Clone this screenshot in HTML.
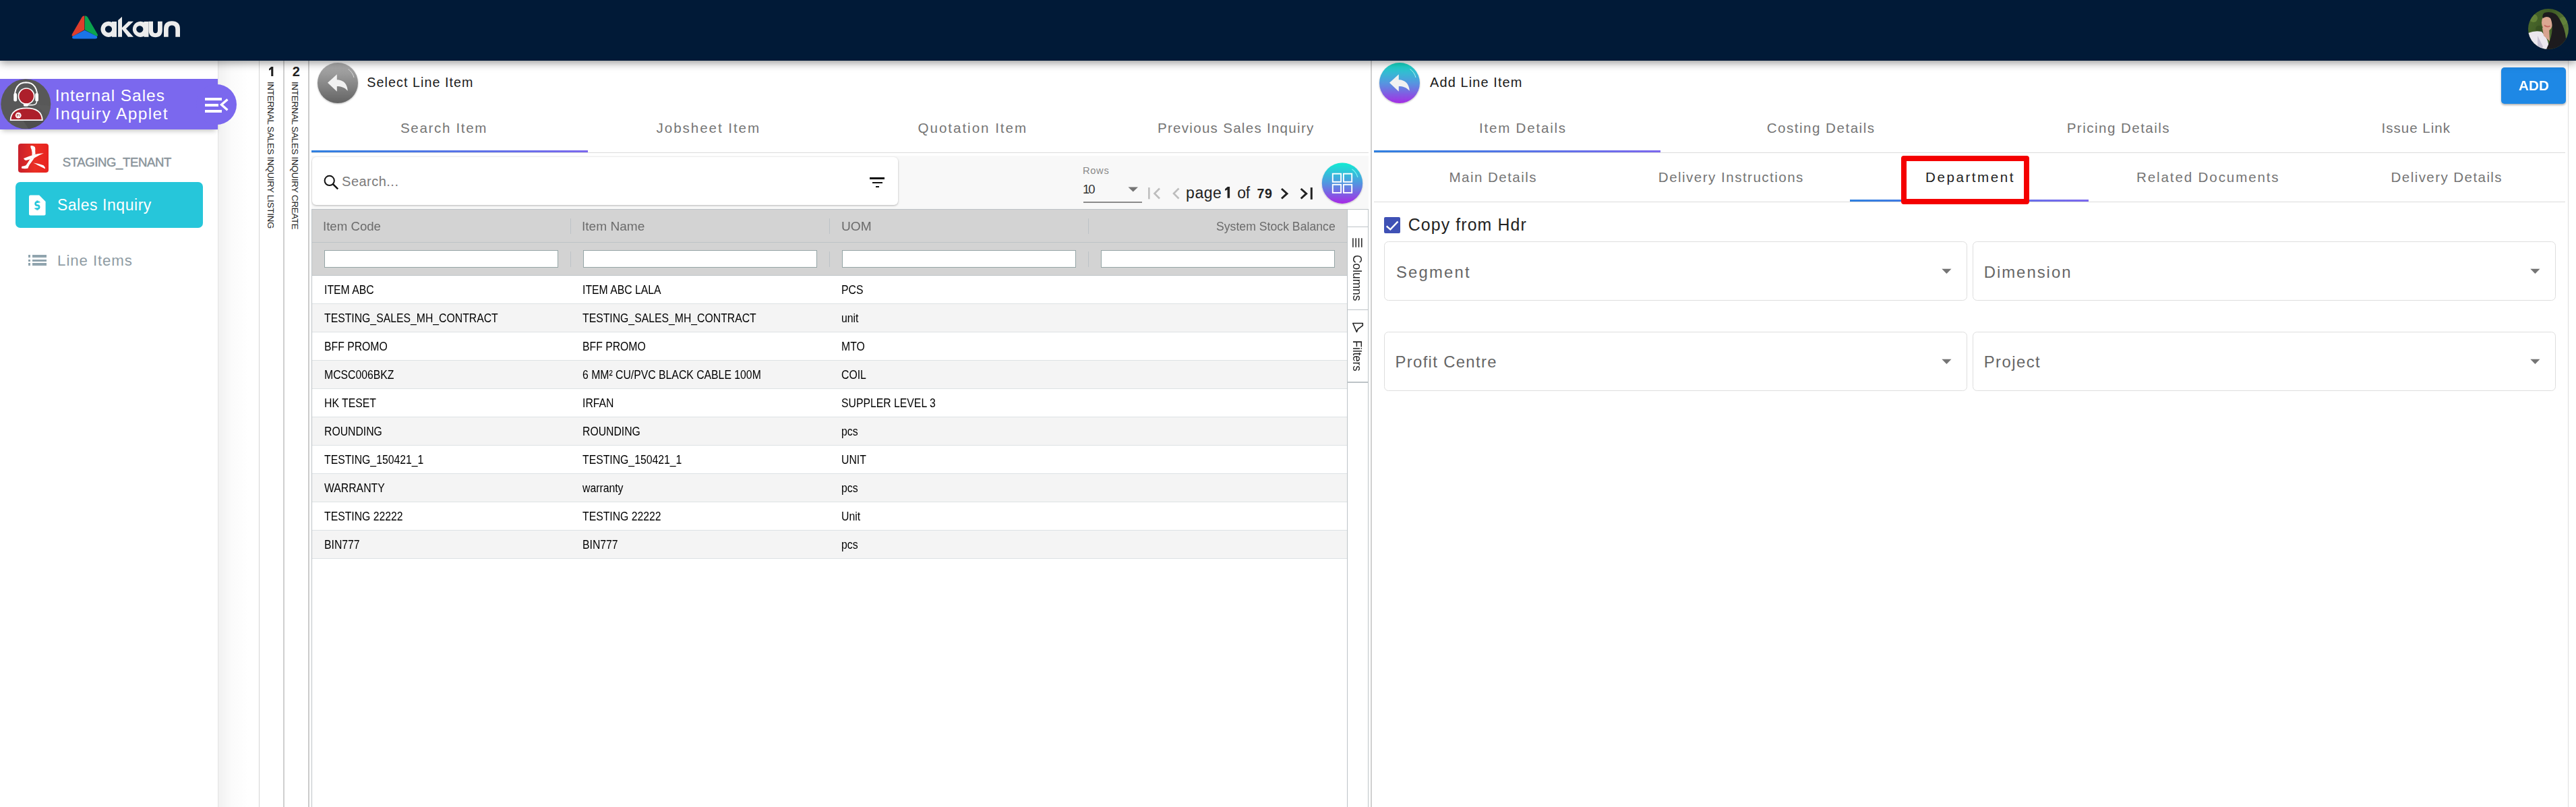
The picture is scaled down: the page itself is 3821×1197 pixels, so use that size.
<!DOCTYPE html>
<html><head><meta charset="utf-8"><title>Sales Inquiry</title>
<style>
html,body{margin:0;padding:0;}
body{width:3821px;height:1197px;overflow:hidden;position:relative;background:#fff;font-family:'Liberation Sans',sans-serif;}
.a{position:absolute;}
.t{position:absolute;white-space:pre;line-height:1;font-family:'Liberation Sans',sans-serif;}
</style></head><body>
<div class="a" style="left:0;top:0;width:3821px;height:90px;background:#011a37;box-shadow:0 3px 12px rgba(0,0,0,.42);z-index:20"><svg class="a" style="left:0;top:0" width="300" height="90" viewBox="0 0 300 90">
<path d="M125.3,44.3 L125.3,23.5 Q123,23 121.5,25.5 L107,50.5 Q105.5,54 108.5,53.8 Z" fill="#de3d2b"/>
<path d="M125.8,44.3 L125.8,23.5 Q128.5,23 130,25.5 L144.5,50.5 Q146,54 143,53.8 Z" fill="#0ba34e"/>
<path d="M125.5,44.8 L144,54 Q145,57.5 141,57.5 L110,57.5 Q106,57.5 107.5,54 Z" fill="#1b74e8"/>
<g fill="#ececec">
<path fill-rule="evenodd" d="M161,31.7 a11.6,11.6 0 1 0 0.01,0 Z M161,38.2 a5.1,5.1 0 1 1 -0.01,0 Z"/>
<rect x="166" y="32" width="7" height="22.8"/>
<path d="M175.1,30 L181,24.8 L181,54.8 L175.1,54.8 Z"/>
<path d="M180,42 L190.5,31.8 L198,31.8 L187,42.5 L198,54.8 L190,54.8 Z"/>
<path fill-rule="evenodd" d="M208.4,31.7 a11.6,11.6 0 1 0 0.01,0 Z M207.3,38.2 a5.1,5.1 0 1 1 -0.01,0 Z"/>
<rect x="213.5" y="32" width="7" height="22.8"/>
<path d="M220.5,31.8 L227,31.8 L227,44.5 Q227,49.3 230.5,49.3 Q234,49.3 234,44.5 L234,31.8 L240.8,31.8 L240.8,44 Q240.8,55.3 230.5,55.3 Q220.5,55.3 220.5,44 Z"/>
<path d="M243,54.8 L243,43 Q243,31.3 255,31.3 Q267,31.3 267,43 L267,54.8 L260.3,54.8 L260.3,43.5 Q260.3,37.5 255,37.5 Q249.7,37.5 249.7,43.5 L249.7,54.8 Z"/>
</g></svg><svg class="a" style="left:3750px;top:13px" width="60" height="60" viewBox="0 0 60 60">
<defs><clipPath id="avc"><circle cx="30" cy="30" r="30"/></clipPath>
<linearGradient id="avbg" x1="0" y1="0" x2="1" y2="0.4"><stop offset="0" stop-color="#4e6b2c"/><stop offset=".5" stop-color="#3d5a25"/><stop offset="1" stop-color="#5d7a38"/></linearGradient></defs>
<g clip-path="url(#avc)">
<rect width="60" height="60" fill="url(#avbg)"/>
<circle cx="8" cy="14" r="6" fill="#6f8f3f" opacity=".7"/><circle cx="16" cy="30" r="5" fill="#344e1f" opacity=".7"/><circle cx="52" cy="18" r="6" fill="#6a8a40" opacity=".6"/>
<path d="M0,36 Q10,32 20,34 Q27,42 29,48 L32,60 L0,60 Z" fill="#ebe7ee"/>
<path d="M14,40 L22,56 L20,60 L14,60 Z" fill="#c9c3d3"/>
<path d="M21,28 L31,28 L32,48 L23,40 Z" fill="#d7a38f"/>
<ellipse cx="28.3" cy="20.5" rx="8.3" ry="12" fill="#dba792"/>
<path d="M24,6 Q40,2 47,16 Q55,30 56,44 Q57,58 50,62 L26,62 Q33,48 35,36 Q37,22 33,14 Q28,10 22,14 Q20,9 24,6 Z" fill="#1d1b1e"/>
<path d="M24,24.5 Q28,28 32.5,25.5" stroke="#c0675e" stroke-width="1.8" fill="none"/>
</g></svg></div><div class="a" style="left:0px;top:90px;width:323px;height:1107px;background:#fff;border-right:1px solid #e3e3e3;"></div><div class="a" style="left:324px;top:90px;width:60px;height:1107px;background:linear-gradient(to right,#f1f1f1,#fbfbfb 20px,#fff 45px);"></div><div class="a" style="left:384px;top:90px;width:1px;height:1107px;background:#d4d4d4;"></div><div class="a" style="left:385px;top:90px;width:36px;height:1107px;background:#fff;"></div><div class="a" style="left:420px;top:90px;width:2px;height:1107px;background:#cfcfcf;"></div><div class="a" style="left:422px;top:90px;width:35px;height:1107px;background:#fff;"></div><div class="a" style="left:457px;top:90px;width:2px;height:1107px;background:#cbcbcb;"></div><div class="a" style="left:0px;top:117px;width:323px;height:75px;background:#7b68ee;box-shadow:0 5px 7px -3px rgba(0,0,0,.25);"></div><div class="a" style="left:291px;top:125px;width:60px;height:60px;background:#7b68ee;border-radius:50%;"></div><div class="a" style="left:304px;top:145px;width:25px;height:3.6px;background:#fff;"></div><div class="a" style="left:304px;top:154px;width:20px;height:3.6px;background:#fff;"></div><div class="a" style="left:304px;top:163px;width:25px;height:3.6px;background:#fff;"></div><svg class="a" style="left:320px;top:140px" width="25" height="30" viewBox="0 0 25 30"><path d="M17.5,7.5 L8.5,15.3 L17.5,23.2" stroke="#fff" stroke-width="3.4" fill="none"/></svg><svg class="a" style="left:1px;top:117px" width="75" height="75" viewBox="0 0 75 75">
<defs><clipPath id="agc"><circle cx="37.3" cy="37.3" r="37"/></clipPath></defs>
<circle cx="37.3" cy="37.3" r="37" fill="#585858"/>
<g clip-path="url(#agc)"><path d="M48,50 L62,61 L80,80 L45,80 L33,61 Z" fill="#4e4e4e"/><path d="M52,38 L80,64 L80,40 Z" fill="#5d5d5d" opacity=".5"/></g>
<path d="M20.8,31 Q19.6,5.6 37.6,5.3 Q55.6,5.6 54.4,31" stroke="#fff" stroke-width="1.9" fill="none"/>
<rect x="19.3" y="21" width="4.8" height="12.5" rx="2.2" fill="#fff"/>
<rect x="51.2" y="21" width="4.8" height="12.5" rx="2.2" fill="#fff"/>
<circle cx="38.1" cy="25.6" r="11.6" fill="#ad1f2b" stroke="#fff" stroke-width="1.7"/>
<path d="M53.6,33 Q53.6,38.7 47,38.7 L38,38.7" stroke="#fff" stroke-width="1.4" fill="none"/>
<rect x="33.8" y="36.8" width="7.4" height="3.9" rx="1.9" fill="#fff"/>
<path d="M14.6,61.1 Q15.5,43.3 38.2,43.3 Q60.9,43.3 61.8,61.1 Z" fill="#ad1f2b" stroke="#fff" stroke-width="1.7"/>
<circle cx="26.2" cy="54.2" r="4.4" fill="#fff"/><text x="26.3" y="56.4" font-size="5.6" text-anchor="middle" fill="#ad1f2b" font-family="Liberation Sans" font-weight="bold">Fi</text>
</svg><div class="t" style="left:81.7px;top:130.2px;font-size:24.5px;font-weight:400;color:#fff;letter-spacing:0.954px;">Internal Sales</div><div class="t" style="left:81.7px;top:157.1px;font-size:24.5px;font-weight:400;color:#fff;letter-spacing:1.408px;">Inquiry Applet</div><svg class="a" style="left:27px;top:213px" width="45" height="43" viewBox="0 0 45 43">
<defs><linearGradient id="rg" x1="0" x2="1"><stop offset="0" stop-color="#c8202b"/><stop offset=".55" stop-color="#ea2f24"/><stop offset="1" stop-color="#e8221f"/></linearGradient></defs>
<rect width="45" height="43" rx="4" fill="url(#rg)"/>
<path d="M18.3,3.3 Q21.5,2.5 24.8,5 Q25.6,7.5 25.2,10 L25.5,16 L20.5,17.5 Q20.8,12 19.8,9 Q18,6 18.3,3.3 Z" fill="#fff"/>
<path d="M8,22 Q15,19 22.3,16.7 Q30,14.5 37.8,14.2 Q31,17 24,21.2 Q18,23.2 11.4,24.9 Q9,24.5 8,22 Z" fill="#fff"/>
<path d="M17.3,23.2 L24.2,21 Q20,27 17,31 Q15,34.5 14.3,36.8 Q10,37.5 5.2,36.8 Q4.6,35 5.5,33.8 Q8.5,33.4 11.4,32.3 Q14.5,28 17.3,23.2 Z" fill="#fff"/>
<path d="M22.2,28.6 Q31,29.5 37.5,32.3 Q40.5,35 40,37.5 Q34,34.5 29,32 Q25.5,30 22.2,28.6 Z" fill="#fff"/>
</svg><div class="t" style="left:92.7px;top:232.0px;font-size:18.5px;font-weight:400;color:#8a949b;letter-spacing:-0.354px;-webkit-text-stroke:0.45px #8a949b;">STAGING_TENANT</div><div class="a" style="left:23px;top:270px;width:277.7px;height:67.7px;background:#26c6da;border-radius:7px;"></div><svg class="a" style="left:43px;top:288.5px" width="25" height="31" viewBox="0 0 25 31">
<path d="M2,0.5 L15.2,0.5 L24.6,10 L24.6,28.5 Q24.6,30.5 22.6,30.5 L2,30.5 Q0,30.5 0,28.5 L0,2.5 Q0,0.5 2,0.5 Z" fill="#fff"/>
<path d="M15.4,11.6 Q15.4,10.6 12.4,10.6 Q9.6,10.6 9.6,13.2 Q9.6,15.6 12.4,15.6 Q15.2,15.6 15.2,18.2 Q15.2,20.6 12.4,20.6 Q9.4,20.6 9.4,19.4 M12.4,8.4 L12.4,10.6 M12.4,20.6 L12.4,22.8" stroke="#26c6da" stroke-width="2.6" fill="none"/>
</svg><div class="t" style="left:84.9px;top:293.0px;font-size:23px;font-weight:400;color:#fff;letter-spacing:0.542px;">Sales Inquiry</div><div class="a" style="left:41.9px;top:378.2px;width:3px;height:3.4px;background:#90a4ae;"></div><div class="a" style="left:48.1px;top:378.2px;width:20.9px;height:3.4px;background:#90a4ae;"></div><div class="a" style="left:41.9px;top:384.7px;width:3px;height:3.4px;background:#90a4ae;"></div><div class="a" style="left:48.1px;top:384.7px;width:20.9px;height:3.4px;background:#90a4ae;"></div><div class="a" style="left:41.9px;top:390.3px;width:3px;height:3.4px;background:#90a4ae;"></div><div class="a" style="left:48.1px;top:390.3px;width:20.9px;height:3.4px;background:#90a4ae;"></div><div class="t" style="left:85.1px;top:375.8px;font-size:22.3px;font-weight:400;color:#8f9ca4;letter-spacing:0.889px;">Line Items</div><div class="t" style="left:433.7px;top:96.0px;font-size:20px;font-weight:700;color:#222;letter-spacing:0.0px;">2</div><svg class="a" style="left:395px;top:96px" width="14" height="20" viewBox="395 96 14 20"><path d="M399,102 L402.3,99.1 L405.3,99.1 L405.3,113 L402.2,113 L402.2,103 L399,104.6 Z" fill="#222"/></svg><div class="t" style="left:389px;top:121px;width:24px;height:220px;writing-mode:vertical-rl;font-size:13.2px;color:#222;letter-spacing:-0.2px;line-height:24px">INTERNAL SALES INQUIRY LISTING</div><div class="t" style="left:425px;top:121px;width:24px;height:220px;writing-mode:vertical-rl;font-size:13.2px;color:#222;letter-spacing:-0.2px;line-height:24px">INTERNAL SALES INQUIRY CREATE</div><div class="a" style="left:459px;top:90px;width:1574px;height:1107px;background:#fff;"></div><svg class="a" style="left:466px;top:88px" width="72" height="72" viewBox="0 0 72 72">
<defs><linearGradient id="gg" x1="0" y1="0" x2="0" y2="1"><stop offset="0" stop-color="#b0b0b0"/><stop offset="1" stop-color="#636363"/></linearGradient>
<filter id="sh" x="-20%" y="-20%" width="140%" height="140%"><feDropShadow dx="0" dy="1" stdDeviation="1.2" flood-color="#000" flood-opacity=".3"/></filter></defs>
<circle cx="35" cy="35" r="30" fill="url(#gg)" filter="url(#sh)"/>
<path d="M50.5,14.5 Q57,19 59,27" stroke="#d8d8d8" stroke-width="1" fill="none"/>
<path d="M20,34.8 L33.8,22.3 L33.8,30.3 C43,30.5 49,36 49.8,46.8 C45,41.5 40,40 33.8,40 L33.8,47.7 Z" fill="#f1f1f1"/>
</svg><div class="t" style="left:544.3px;top:112.8px;font-size:19.7px;font-weight:400;color:#1a1a1a;letter-spacing:1.067px;">Select Line Item</div><div class="t" style="left:593.9px;top:179.9px;font-size:20.6px;font-weight:400;color:#757575;letter-spacing:1.65px;">Search Item</div><div class="t" style="left:973.5px;top:179.9px;font-size:20.6px;font-weight:400;color:#757575;letter-spacing:1.942px;">Jobsheet Item</div><div class="t" style="left:1361.5px;top:179.9px;font-size:20.6px;font-weight:400;color:#757575;letter-spacing:1.962px;">Quotation Item</div><div class="t" style="left:1717.0px;top:179.9px;font-size:20.6px;font-weight:400;color:#757575;letter-spacing:1.257px;">Previous Sales Inquiry</div><div class="a" style="left:462px;top:226px;width:1568px;height:1px;background:#dcdcdc;"></div><div class="a" style="left:461.6px;top:223px;width:410.4px;height:3px;background:linear-gradient(to right,#2f80e0,#7b68ee);"></div><div class="a" style="left:462px;top:231px;width:1568px;height:79px;background:#f8f8f8;"></div><div class="a" style="left:463px;top:232.7px;width:869px;height:71.5px;background:#fff;border-radius:6px;box-shadow:0 1px 3px rgba(0,0,0,.28);"></div><svg class="a" style="left:478px;top:258px" width="26" height="26" viewBox="0 0 26 26">
<circle cx="10.7" cy="9.9" r="7.1" stroke="#111" stroke-width="2" fill="none"/><path d="M15.9,15.1 L23.2,22.4" stroke="#111" stroke-width="2.5"/></svg><div class="t" style="left:507.1px;top:259.0px;font-size:20px;font-weight:400;color:#7a7a7a;letter-spacing:0.475px;">Search...</div><div class="a" style="left:1289.9px;top:263.3px;width:22.6px;height:2.6px;background:#111;"></div><div class="a" style="left:1294px;top:269.9px;width:14.6px;height:2.3px;background:#111;"></div><div class="a" style="left:1299px;top:276px;width:4.9px;height:2.4px;background:#111;"></div><div class="t" style="left:1606.0px;top:246.2px;font-size:14.7px;font-weight:400;color:#8a8a8a;letter-spacing:0.667px;">Rows</div><div class="t" style="left:1606.0px;top:271.6px;font-size:18.5px;font-weight:400;color:#333;letter-spacing:-2.0px;">10</div><svg class="a" style="left:1670px;top:274px" width="22" height="14" viewBox="0 0 22 14"><path d="M3.5,3.5 L18,3.5 L10.75,10.6 Z" fill="#757575"/></svg><div class="a" style="left:1607px;top:299px;width:86.6px;height:2px;background:#8a8a8a;"></div><svg class="a" style="left:1695px;top:270px" width="260" height="32" viewBox="1695 270 260 32">
<rect x="1703.1" y="278.1" width="2.5" height="17.2" fill="#bdbdbd"/>
<path d="M1720,279.5 L1712.5,287 L1720,294.5" stroke="#bdbdbd" stroke-width="2.6" fill="none"/>
<path d="M1748.5,279.5 L1741,287 L1748.5,294.5" stroke="#bdbdbd" stroke-width="2.6" fill="none"/>
<path d="M1901,280 L1909,287.2 L1901,294.5" stroke="#222" stroke-width="3" fill="none"/>
<path d="M1929.7,280 L1937.7,287.2 L1929.7,294.5" stroke="#222" stroke-width="3" fill="none"/>
<rect x="1943.8" y="278.1" width="3" height="17.7" fill="#222"/>
</svg><div class="t" style="left:1759.1px;top:274.8px;font-size:23px;font-weight:400;color:#222;letter-spacing:0.5px;">page</div><div class="t" style="left:1835.3px;top:274.8px;font-size:23px;font-weight:400;color:#222;letter-spacing:-0.3px;">of</div><div class="t" style="left:1864.4px;top:277.8px;font-size:19.6px;font-weight:700;color:#222;letter-spacing:0.7px;">79</div><svg class="a" style="left:1810px;top:272px" width="20" height="26" viewBox="1810 272 20 26"><path d="M1817.1,280.3 L1820.9,277.1 L1824.1,277.1 L1824.1,293.8 L1820.6,293.8 L1820.6,281.3 L1817.1,283.1 Z" fill="#222"/></svg><svg class="a" style="left:1955px;top:235px" width="72" height="72" viewBox="0 0 72 72">
<defs><linearGradient id="cg" x1="0" y1="0" x2="0" y2="1"><stop offset="0" stop-color="#12ecd3"/><stop offset=".5" stop-color="#5296e0"/><stop offset="1" stop-color="#a72ae6"/></linearGradient>
<filter id="sh2" x="-20%" y="-20%" width="140%" height="140%"><feDropShadow dx="0" dy="1" stdDeviation="1.2" flood-color="#000" flood-opacity=".25"/></filter></defs>
<circle cx="36" cy="36.7" r="30.2" fill="url(#cg)" filter="url(#sh2)"/>
<path d="M50.5,16 Q57,20.5 59,28" stroke="#7ff3f3" stroke-width="1.1" fill="none"/>
<g stroke="#fff" stroke-width="1.9" fill="none">
<rect x="21.8" y="22.7" width="12.3" height="12.1"/><rect x="37.9" y="22.7" width="12.3" height="12.1"/>
<rect x="21.8" y="38.8" width="12.3" height="12.1"/><rect x="37.9" y="38.8" width="12.3" height="12.1"/></g>
</svg><div class="a" style="left:462px;top:310px;width:1px;height:887px;background:#bdc3c7;"></div><div class="a" style="left:463px;top:310.5px;width:1536px;height:98px;background:#d3d3d3;"></div><div class="a" style="left:462px;top:310px;width:1568px;height:1px;background:#bdc3c7;"></div><div class="a" style="left:463px;top:359px;width:1536px;height:1px;background:#bdc3c7;"></div><div class="a" style="left:463px;top:408px;width:1536px;height:1px;background:#bdc3c7;"></div><div class="a" style="left:846px;top:324px;width:1px;height:23px;background:#bdc3c7;"></div><div class="a" style="left:846px;top:373px;width:1px;height:23px;background:#bdc3c7;"></div><div class="a" style="left:1230px;top:324px;width:1px;height:23px;background:#bdc3c7;"></div><div class="a" style="left:1230px;top:373px;width:1px;height:23px;background:#bdc3c7;"></div><div class="a" style="left:1614px;top:324px;width:1px;height:23px;background:#bdc3c7;"></div><div class="a" style="left:1614px;top:373px;width:1px;height:23px;background:#bdc3c7;"></div><div class="t" style="left:479.37px;top:326.9px;font-size:18.4px;font-weight:400;color:#6b6b6b;letter-spacing:0.0px;transform:scaleX(1.0134);transform-origin:0 0;">Item Code</div><div class="t" style="left:862.93px;top:326.9px;font-size:18.4px;font-weight:400;color:#6b6b6b;letter-spacing:0.0px;transform:scaleX(1.0368);transform-origin:0 0;">Item Name</div><div class="t" style="left:1247.96px;top:326.9px;font-size:18.4px;font-weight:400;color:#6b6b6b;letter-spacing:0.0px;transform:scaleX(1.0425);transform-origin:0 0;">UOM</div><div class="t" style="left:1803.64px;top:326.9px;font-size:18.4px;font-weight:400;color:#6b6b6b;letter-spacing:0.0px;transform:scaleX(0.9604);transform-origin:0 0;">System Stock Balance</div><div class="a" style="left:481.4px;top:371px;width:347px;height:25.6px;background:#fff;border:1px solid #95a5a6;box-sizing:border-box;"></div><div class="a" style="left:865px;top:371px;width:347px;height:25.6px;background:#fff;border:1px solid #95a5a6;box-sizing:border-box;"></div><div class="a" style="left:1249px;top:371px;width:347px;height:25.6px;background:#fff;border:1px solid #95a5a6;box-sizing:border-box;"></div><div class="a" style="left:1633px;top:371px;width:347px;height:25.6px;background:#fff;border:1px solid #95a5a6;box-sizing:border-box;"></div><div class="a" style="left:463px;top:409.0px;width:1536px;height:41px;background:#fff;"></div><div class="a" style="left:463px;top:450.0px;width:1536px;height:1px;background:#dde2e4;"></div><div class="t" style="left:480.5px;top:421.3px;font-size:18.8px;color:#000;transform:scaleX(.84);transform-origin:0 0">ITEM ABC</div><div class="t" style="left:864px;top:421.3px;font-size:18.8px;color:#000;transform:scaleX(.84);transform-origin:0 0">ITEM ABC LALA</div><div class="t" style="left:1248px;top:421.3px;font-size:18.8px;color:#000;transform:scaleX(.84);transform-origin:0 0">PCS</div><div class="a" style="left:463px;top:451.0px;width:1536px;height:41px;background:#f4f4f4;"></div><div class="a" style="left:463px;top:492.0px;width:1536px;height:1px;background:#dde2e4;"></div><div class="t" style="left:480.5px;top:463.3px;font-size:18.8px;color:#000;transform:scaleX(.84);transform-origin:0 0">TESTING_SALES_MH_CONTRACT</div><div class="t" style="left:864px;top:463.3px;font-size:18.8px;color:#000;transform:scaleX(.84);transform-origin:0 0">TESTING_SALES_MH_CONTRACT</div><div class="t" style="left:1248px;top:463.3px;font-size:18.8px;color:#000;transform:scaleX(.84);transform-origin:0 0">unit</div><div class="a" style="left:463px;top:493.0px;width:1536px;height:41px;background:#fff;"></div><div class="a" style="left:463px;top:534.0px;width:1536px;height:1px;background:#dde2e4;"></div><div class="t" style="left:480.5px;top:505.29999999999995px;font-size:18.8px;color:#000;transform:scaleX(.84);transform-origin:0 0">BFF PROMO</div><div class="t" style="left:864px;top:505.29999999999995px;font-size:18.8px;color:#000;transform:scaleX(.84);transform-origin:0 0">BFF PROMO</div><div class="t" style="left:1248px;top:505.29999999999995px;font-size:18.8px;color:#000;transform:scaleX(.84);transform-origin:0 0">MTO</div><div class="a" style="left:463px;top:535.0px;width:1536px;height:41px;background:#f4f4f4;"></div><div class="a" style="left:463px;top:576.0px;width:1536px;height:1px;background:#dde2e4;"></div><div class="t" style="left:480.5px;top:547.3px;font-size:18.8px;color:#000;transform:scaleX(.84);transform-origin:0 0">MCSC006BKZ</div><div class="t" style="left:864px;top:547.3px;font-size:18.8px;color:#000;transform:scaleX(.84);transform-origin:0 0">6 MM² CU/PVC BLACK CABLE 100M</div><div class="t" style="left:1248px;top:547.3px;font-size:18.8px;color:#000;transform:scaleX(.84);transform-origin:0 0">COIL</div><div class="a" style="left:463px;top:577.0px;width:1536px;height:41px;background:#fff;"></div><div class="a" style="left:463px;top:618.0px;width:1536px;height:1px;background:#dde2e4;"></div><div class="t" style="left:480.5px;top:589.3px;font-size:18.8px;color:#000;transform:scaleX(.84);transform-origin:0 0">HK TESET</div><div class="t" style="left:864px;top:589.3px;font-size:18.8px;color:#000;transform:scaleX(.84);transform-origin:0 0">IRFAN</div><div class="t" style="left:1248px;top:589.3px;font-size:18.8px;color:#000;transform:scaleX(.84);transform-origin:0 0">SUPPLER LEVEL 3</div><div class="a" style="left:463px;top:619.0px;width:1536px;height:41px;background:#f4f4f4;"></div><div class="a" style="left:463px;top:660.0px;width:1536px;height:1px;background:#dde2e4;"></div><div class="t" style="left:480.5px;top:631.3px;font-size:18.8px;color:#000;transform:scaleX(.84);transform-origin:0 0">ROUNDING</div><div class="t" style="left:864px;top:631.3px;font-size:18.8px;color:#000;transform:scaleX(.84);transform-origin:0 0">ROUNDING</div><div class="t" style="left:1248px;top:631.3px;font-size:18.8px;color:#000;transform:scaleX(.84);transform-origin:0 0">pcs</div><div class="a" style="left:463px;top:661.0px;width:1536px;height:41px;background:#fff;"></div><div class="a" style="left:463px;top:702.0px;width:1536px;height:1px;background:#dde2e4;"></div><div class="t" style="left:480.5px;top:673.3px;font-size:18.8px;color:#000;transform:scaleX(.84);transform-origin:0 0">TESTING_150421_1</div><div class="t" style="left:864px;top:673.3px;font-size:18.8px;color:#000;transform:scaleX(.84);transform-origin:0 0">TESTING_150421_1</div><div class="t" style="left:1248px;top:673.3px;font-size:18.8px;color:#000;transform:scaleX(.84);transform-origin:0 0">UNIT</div><div class="a" style="left:463px;top:703.0px;width:1536px;height:41px;background:#f4f4f4;"></div><div class="a" style="left:463px;top:744.0px;width:1536px;height:1px;background:#dde2e4;"></div><div class="t" style="left:480.5px;top:715.3px;font-size:18.8px;color:#000;transform:scaleX(.84);transform-origin:0 0">WARRANTY</div><div class="t" style="left:864px;top:715.3px;font-size:18.8px;color:#000;transform:scaleX(.84);transform-origin:0 0">warranty</div><div class="t" style="left:1248px;top:715.3px;font-size:18.8px;color:#000;transform:scaleX(.84);transform-origin:0 0">pcs</div><div class="a" style="left:463px;top:745.0px;width:1536px;height:41px;background:#fff;"></div><div class="a" style="left:463px;top:786.0px;width:1536px;height:1px;background:#dde2e4;"></div><div class="t" style="left:480.5px;top:757.3px;font-size:18.8px;color:#000;transform:scaleX(.84);transform-origin:0 0">TESTING 22222</div><div class="t" style="left:864px;top:757.3px;font-size:18.8px;color:#000;transform:scaleX(.84);transform-origin:0 0">TESTING 22222</div><div class="t" style="left:1248px;top:757.3px;font-size:18.8px;color:#000;transform:scaleX(.84);transform-origin:0 0">Unit</div><div class="a" style="left:463px;top:787.0px;width:1536px;height:41px;background:#f4f4f4;"></div><div class="a" style="left:463px;top:828.0px;width:1536px;height:1px;background:#dde2e4;"></div><div class="t" style="left:480.5px;top:799.3px;font-size:18.8px;color:#000;transform:scaleX(.84);transform-origin:0 0">BIN777</div><div class="t" style="left:864px;top:799.3px;font-size:18.8px;color:#000;transform:scaleX(.84);transform-origin:0 0">BIN777</div><div class="t" style="left:1248px;top:799.3px;font-size:18.8px;color:#000;transform:scaleX(.84);transform-origin:0 0">pcs</div><div class="a" style="left:1998px;top:310.5px;width:32px;height:887px;background:#fff;border-left:1px solid #bdc3c7;border-right:1px solid #bdc3c7;box-sizing:border-box;"></div><div class="a" style="left:1999px;top:335.5px;width:30px;height:1px;background:#bdc3c7;"></div><div class="a" style="left:1999px;top:458.5px;width:30px;height:1.5px;background:#bdc3c7;"></div><div class="a" style="left:1999px;top:566px;width:30px;height:1.5px;background:#bdc3c7;"></div><svg class="a" style="left:2000px;top:350px" width="28" height="20" viewBox="2000 350 28 20"><g stroke="#222" stroke-width="1.5"><path d="M2006.9,353.3 V366.7 M2011.2,353.3 V366.7 M2015.5,353.3 V366.7 M2019.8,353.3 V366.7"/></g></svg><div class="t" style="left:2000px;top:378px;width:26px;writing-mode:vertical-rl;font-size:17.5px;color:#222;line-height:26px;transform:scaleY(.99);transform-origin:0 0">Columns</div><svg class="a" style="left:2004px;top:477px" width="20" height="18" viewBox="0 0 20 18"><path d="M2.8,2.5 L17.3,2.5 L17.3,5.8 L10.2,11.1 L8.3,15.3 Z" stroke="#222" stroke-width="1.6" fill="none" stroke-linejoin="round"/></svg><div class="t" style="left:2000px;top:505px;width:26px;writing-mode:vertical-rl;font-size:17.5px;color:#222;line-height:26px;transform:scaleY(.956);transform-origin:0 0">Filters</div><div class="a" style="left:2033px;top:90px;width:2px;height:1107px;background:#d0d0d0;"></div><div class="a" style="left:2035px;top:90px;width:1786px;height:1107px;background:#fff;"></div><svg class="a" style="left:2041px;top:88px" width="72" height="72" viewBox="0 0 72 72">
<defs><linearGradient id="bg2" x1="0" y1="0" x2="0" y2="1"><stop offset="0" stop-color="#15dfc6"/><stop offset=".5" stop-color="#5596e0"/><stop offset="1" stop-color="#a52de4"/></linearGradient>
<filter id="sh3" x="-20%" y="-20%" width="140%" height="140%"><feDropShadow dx="0" dy="1" stdDeviation="1.2" flood-color="#000" flood-opacity=".3"/></filter></defs>
<circle cx="35" cy="35" r="30" fill="url(#bg2)" filter="url(#sh3)"/>
<path d="M50.5,14.5 Q57,19 59,27" stroke="#b0f4f0" stroke-width="1" fill="none"/>
<path d="M20,34.8 L33.8,22.3 L33.8,30.3 C43,30.5 49,36 49.8,46.8 C45,41.5 40,40 33.8,40 L33.8,47.7 Z" fill="#f1f1f1"/>
</svg><div class="t" style="left:2121.0px;top:111.9px;font-size:20px;font-weight:400;color:#1a1a1a;letter-spacing:1.083px;">Add Line Item</div><div class="a" style="left:3710px;top:99.8px;width:96px;height:54.3px;background:#1e88e5;border-radius:5px;box-shadow:0 2px 3px rgba(0,0,0,.3);"></div><div class="t" style="left:3735.51px;top:115.9px;font-size:21px;font-weight:700;color:#fff;letter-spacing:0.0px;transform:scaleX(0.9886);transform-origin:0 0;">ADD</div><div class="t" style="left:2194.0px;top:179.9px;font-size:20.6px;font-weight:400;color:#757575;letter-spacing:1.764px;">Item Details</div><div class="t" style="left:2620.7px;top:179.9px;font-size:20.6px;font-weight:400;color:#757575;letter-spacing:1.486px;">Costing Details</div><div class="t" style="left:3065.7px;top:179.9px;font-size:20.6px;font-weight:400;color:#757575;letter-spacing:1.45px;">Pricing Details</div><div class="t" style="left:3532.6px;top:179.9px;font-size:20.6px;font-weight:400;color:#757575;letter-spacing:0.967px;">Issue Link</div><div class="a" style="left:2038px;top:226px;width:1767px;height:1px;background:#dcdcdc;"></div><div class="a" style="left:2038px;top:223px;width:425px;height:3px;background:linear-gradient(to right,#2f80e0,#7b68ee);"></div><div class="t" style="left:2149.4px;top:252.9px;font-size:20.6px;font-weight:400;color:#757575;letter-spacing:1.445px;">Main Details</div><div class="t" style="left:2459.8px;top:252.9px;font-size:20.6px;font-weight:400;color:#757575;letter-spacing:1.46px;">Delivery Instructions</div><div class="t" style="left:3169.0px;top:252.9px;font-size:20.6px;font-weight:400;color:#757575;letter-spacing:1.863px;">Related Documents</div><div class="t" style="left:3546.6px;top:252.9px;font-size:20.6px;font-weight:400;color:#757575;letter-spacing:1.4px;">Delivery Details</div><div class="a" style="left:2038px;top:299px;width:1767px;height:1px;background:#dcdcdc;"></div><div class="a" style="left:2743.5px;top:296px;width:354.5px;height:3px;background:linear-gradient(to right,#2f80e0,#7b68ee);"></div><div class="a" style="left:2820px;top:230.8px;width:190px;height:72.7px;border:8.7px solid #f40000;border-radius:4px;box-sizing:border-box;"></div><div class="t" style="left:2856.0px;top:252.9px;font-size:20.6px;font-weight:400;color:#222;letter-spacing:2.544px;">Department</div><div class="a" style="left:2052.9px;top:321.9px;width:24.1px;height:24px;background:#3f51b5;border-radius:2px;"></div><svg class="a" style="left:2052.9px;top:321.9px" width="24" height="24" viewBox="0 0 24 24"><path d="M3.7,13.3 L9.3,18.4 L20.5,6.7" stroke="#fff" stroke-width="2.4" fill="none"/></svg><div class="t" style="left:2088.7px;top:321.1px;font-size:24.9px;font-weight:400;color:#222;letter-spacing:1.108px;">Copy from Hdr</div><div class="a" style="left:2053.1px;top:358px;width:865px;height:88.4px;border:1.3px solid #dedede;border-radius:6.5px;box-sizing:border-box;"></div><svg class="a" style="left:2880.1px;top:398px" width="15" height="9" viewBox="0 0 15 9"><path d="M0.3,0.8 L14.5,0.8 L7.4,8 Z" fill="#757575"/></svg><div class="a" style="left:2926.4px;top:358px;width:865px;height:88.4px;border:1.3px solid #dedede;border-radius:6.5px;box-sizing:border-box;"></div><svg class="a" style="left:3753.4px;top:398px" width="15" height="9" viewBox="0 0 15 9"><path d="M0.3,0.8 L14.5,0.8 L7.4,8 Z" fill="#757575"/></svg><div class="a" style="left:2053.1px;top:491.6px;width:865px;height:88.4px;border:1.3px solid #dedede;border-radius:6.5px;box-sizing:border-box;"></div><svg class="a" style="left:2880.1px;top:531.6px" width="15" height="9" viewBox="0 0 15 9"><path d="M0.3,0.8 L14.5,0.8 L7.4,8 Z" fill="#757575"/></svg><div class="a" style="left:2926.4px;top:491.6px;width:865px;height:88.4px;border:1.3px solid #dedede;border-radius:6.5px;box-sizing:border-box;"></div><svg class="a" style="left:3753.4px;top:531.6px" width="15" height="9" viewBox="0 0 15 9"><path d="M0.3,0.8 L14.5,0.8 L7.4,8 Z" fill="#757575"/></svg><div class="t" style="left:2071.0px;top:391.8px;font-size:23.9px;font-weight:400;color:#666;letter-spacing:2.167px;">Segment</div><div class="t" style="left:2942.7px;top:391.8px;font-size:23.9px;font-weight:400;color:#666;letter-spacing:1.988px;">Dimension</div><div class="t" style="left:2069.5px;top:525.4px;font-size:23.9px;font-weight:400;color:#666;letter-spacing:1.325px;">Profit Centre</div><div class="t" style="left:2942.7px;top:525.4px;font-size:23.9px;font-weight:400;color:#666;letter-spacing:1.45px;">Project</div><div class="a" style="left:3809px;top:90px;width:1px;height:1107px;background:#dedede;"></div>
</body></html>
